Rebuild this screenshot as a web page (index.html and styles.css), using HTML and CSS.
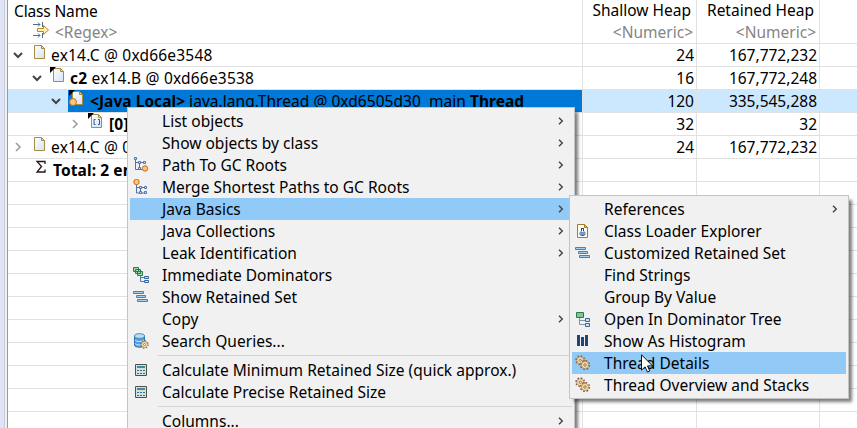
FILE: index.html
```
<!DOCTYPE html>
<html lang="en">
<head>
<meta charset="utf-8">
<title>Heap objects</title>
<link rel="stylesheet" href="styles.css">
</head>
<body>
<svg class="defs" aria-hidden="true">
  <defs>
    <linearGradient id="paper" x1="0" y1="0" x2="1" y2="1"><stop offset="0" stop-color="#fff"/><stop offset="1" stop-color="#d4e2f4"/></linearGradient>
    <symbol id="doc" viewBox="0 0 16 16"><path d="M2.5 1.5h7l3 3v10h-10z" fill="url(#paper)" stroke="#a58d43"/><path d="M9.5 1.5v3h3z" fill="#e9d9a1" stroke="#a58d43"/></symbol>
    <symbol id="chev" viewBox="0 0 16 16"><path d="M4 6l4 4 4-4" fill="none" stroke="#444" stroke-width="2"/></symbol>
    <symbol id="right" viewBox="0 0 16 16"><path d="M6 4l4 4-4 4" fill="none" stroke="#a0a0a0" stroke-width="1.7"/></symbol>
    <symbol id="arrow" viewBox="0 0 8 8"><path d="M2 .7l3.300 3.300-3.300 3.300" fill="none" stroke="#444" stroke-width="1.4"/></symbol>
    <symbol id="path" viewBox="0 0 16 16"><path d="M2.5 1v11.500h7M2.500 5.500h9M6.500 5.500v7" fill="none" stroke="#5272ac"/><path d="M1.500.500h2v2h-2zM5.500 4.500h2v2h-2zM10.500 4.500h2v2h-2zM5.500 10.500h2v2h-2z" fill="#dce8fa" stroke="#5272ac"/><circle cx="12" cy="11.500" r="2.700" fill="#ffc580" stroke="#c66d12"/></symbol>
    <symbol id="merge" viewBox="0 0 16 16"><path d="M3.500 5v9h9M3.500 8.500h9M7.500 8.500v5.500" fill="none" stroke="#5272ac"/><path d="M6.500 7.500h2v2h-2zM11.500 7.500h2v2h-2zM6.500 12.500h2v2h-2zM11.500 12.500h2v2h-2z" fill="#dce8fa" stroke="#5272ac"/><circle cx="3.500" cy="3" r="2.700" fill="#ffc580" stroke="#c66d12"/></symbol>
    <symbol id="dom" viewBox="0 0 16 16"><path d="M.500.500h5v4h-5zM2.500 2.500h5v4h-5zM4.500 4.500h5v4h-5z" fill="#a6d8b4" stroke="#277c4b"/><path d="M7.500 8.500v6H12M7.500 10.500H12" fill="none" stroke="#5878aa"/><path d="M11.500 9.500h4v2h-4zM11.500 13.500h4v2h-4z" fill="#cce1fa" stroke="#3767a3"/></symbol>
    <symbol id="tree" viewBox="0 0 16 16"><path d="M1.500 1.500h7v5h-7z" fill="#82c595" stroke="#277c4b"/><path d="M4.500 7v6.500H10M4.500 9.500H10" fill="none" stroke="#8292a5"/><path d="M10.500 7.500h4v3h-4zM10.500 12.500h4v3h-4z" fill="#cce1fa" stroke="#3767a3"/></symbol>
    <symbol id="set" viewBox="0 0 16 16"><path d="M.500 2.500h10v2H.500zM3.500 6.500h9v2h-9zM4.500 10.500h10v2h-10z" fill="#a9cce7" stroke="#567ca7"/></symbol>
    <symbol id="calc" viewBox="0 0 16 16"><path d="M2.500 2.500h11v11h-11z" fill="#d3e2df" stroke="#545238"/><path d="M4 4h8v2H4z" fill="#3e87ad"/><path d="M4 8h2v1H4zm3 0h2v1H7zm3 0h2v1h-2zm-6 3h2v1H4zm3 0h2v1H7zm3 0h2v1h-2z" fill="#386f91"/></symbol>
    <symbol id="cog" viewBox="0 0 10 10"><circle cx="5" cy="5" r="3.900" fill="none" stroke="#8b6048" stroke-width="1.700" stroke-dasharray="1.530 1.530"/><circle cx="5" cy="5" r="3.200" fill="#fbe3a8" stroke="#b98a50" stroke-width=".7"/><circle cx="5" cy="5" r="1.100" fill="#fff" stroke="#735f58" stroke-width=".8"/></symbol>
    <symbol id="gears" viewBox="0 0 16 16"><use href="#cog" x="0" y="0" width="10.500" height="10.500"/><use href="#cog" x="4.500" y="4.500" width="11" height="11"/></symbol>
    <symbol id="search" viewBox="0 0 16 16"><path d="M1.500 3v9c0 3 10 3 10 0V3z" fill="#579be0" stroke="#3070b5"/><ellipse cx="6.500" cy="3" rx="5" ry="2.300" fill="#b9e0f2" stroke="#4988b7"/><path d="M2 7c1 2 8 2 9 0M2 10.500c1 2 8 2 9 0" fill="none" stroke="#d1edff"/><use href="#cog" x="7" y="7" width="9" height="9"/></symbol>
    <symbol id="loader" viewBox="0 0 16 16"><path d="M2.500 1.500h7l3 3v10h-10z" fill="#fffdf4" stroke="#a57b22"/><path d="M9.500 1.500v3h3z" fill="#e8c875" stroke="#a57b22"/><path d="M6 5.500h3M6.500 6v2c-2 1.500-2 4.500 0 4.500h2c2 0 2-3 0-4.500V6" fill="#fff" stroke="#244c79"/><path d="M6 9h3v3H6z" fill="#5a9fdc"/></symbol>
    <symbol id="bars" viewBox="0 0 16 16"><path d="M2 2h3v11H2zM6 4h3v9H6zM10 2h3v11h-3z" fill="#204678"/></symbol>
    <symbol id="filter" viewBox="0 0 16 16"><path d="M0 2.500h7M0 13.500h7M5 .500l2 2-2 2M5 11.500l2 2-2 2M9.500 0v5M9.500 11v5" fill="none" stroke="#526d87"/><path d="M4.500 6.500h6v-3l5 4.500-5 4.500v-3h-6z" fill="#fff0b5" stroke="#bd851c"/></symbol>
  </defs>
</svg>
<main class="view">
  <div class="gutter"></div>
  <div class="table">
    <div class="row head"><div class="cell name">Class Name</div><div class="cell num">Shallow Heap</div><div class="cell num">Retained Heap</div><div class="cell"></div></div>
    <div class="row filter"><div class="cell name"><svg class="ic"><use href="#filter"/></svg><span>&lt;Regex&gt;</span></div><div class="cell num">&lt;Numeric&gt;</div><div class="cell num">&lt;Numeric&gt;</div><div class="cell"></div></div>
    <div class="row"><div class="cell name l0"><svg class="tw"><use href="#chev"/></svg><svg class="ic"><use href="#doc"/></svg><span class="label">ex14.C @ 0xd66e3548</span></div><div class="cell num">24</div><div class="cell num">167,772,232</div><div class="cell"></div></div>
    <div class="row"><div class="cell name l1"><svg class="tw"><use href="#chev"/></svg><span class="ic tagged"><svg class="ic"><use href="#doc"/></svg></span><span class="label"><b>c2</b> ex14.B @ 0xd66e3538</span></div><div class="cell num">16</div><div class="cell num">167,772,248</div><div class="cell"></div></div>
    <div class="row current"><div class="cell name l2"><svg class="tw"><use href="#chev"/></svg><div class="selected"><span class="ic tagged rooted"><svg class="ic"><use href="#doc"/></svg></span><span class="label"><b>&lt;Java Local&gt;</b> java.lang.Thread @ 0xd6505d30&nbsp; main <b>Thread</b></span></div></div><div class="cell num">120</div><div class="cell num">335,545,288</div><div class="cell"></div></div>
    <div class="row"><div class="cell name l3"><svg class="tw"><use href="#right"/></svg><span class="ic tagged"><svg class="ic" viewBox="0 0 16 16"><use href="#doc"/><path d="M6.500 6.500H5v5h1.500M9 6.500h1.500v5H9" fill="none" stroke="#215fa5"/></svg></span><span class="label"><b>[0]</b></span></div><div class="cell num">32</div><div class="cell num">32</div><div class="cell"></div></div>
    <div class="row"><div class="cell name l0"><svg class="tw"><use href="#right"/></svg><svg class="ic"><use href="#doc"/></svg><span class="label">ex14.C @ 0</span></div><div class="cell num">24</div><div class="cell num">167,772,232</div><div class="cell"></div></div>
    <div class="row"><div class="cell name total"><svg class="ic" viewBox="0 0 16 16"><path d="M12 5V2.500H4l4.500 5L4 13h8v-2.500" fill="none" stroke="#28151b" stroke-width="1.300"/></svg><b>Total: 2 en</b></div><div class="cell"></div><div class="cell"></div><div class="cell"></div></div>
    <div class="row"><i class="cell"></i><i class="cell"></i><i class="cell"></i><i class="cell"></i></div>
    <div class="row"><i class="cell"></i><i class="cell"></i><i class="cell"></i><i class="cell"></i></div>
    <div class="row"><i class="cell"></i><i class="cell"></i><i class="cell"></i><i class="cell"></i></div>
    <div class="row"><i class="cell"></i><i class="cell"></i><i class="cell"></i><i class="cell"></i></div>
    <div class="row"><i class="cell"></i><i class="cell"></i><i class="cell"></i><i class="cell"></i></div>
    <div class="row"><i class="cell"></i><i class="cell"></i><i class="cell"></i><i class="cell"></i></div>
    <div class="row"><i class="cell"></i><i class="cell"></i><i class="cell"></i><i class="cell"></i></div>
    <div class="row"><i class="cell"></i><i class="cell"></i><i class="cell"></i><i class="cell"></i></div>
    <div class="row"><i class="cell"></i><i class="cell"></i><i class="cell"></i><i class="cell"></i></div>
    <div class="row"><i class="cell"></i><i class="cell"></i><i class="cell"></i><i class="cell"></i></div>
    <div class="row"><i class="cell"></i><i class="cell"></i><i class="cell"></i><i class="cell"></i></div>
  </div>
</main>
<nav class="menu context">
  <div class="item"><span></span><span>List objects</span><svg class="go"><use href="#arrow"/></svg></div>
  <div class="item"><span></span><span>Show objects by class</span><svg class="go"><use href="#arrow"/></svg></div>
  <div class="item"><svg class="ic"><use href="#path"/></svg><span>Path To GC Roots</span><svg class="go"><use href="#arrow"/></svg></div>
  <div class="item"><svg class="ic"><use href="#merge"/></svg><span>Merge Shortest Paths to GC Roots</span><svg class="go"><use href="#arrow"/></svg></div>
  <div class="item active"><span></span><span>Java Basics</span><svg class="go"><use href="#arrow"/></svg></div>
  <div class="item"><span></span><span>Java Collections</span><svg class="go"><use href="#arrow"/></svg></div>
  <div class="item"><span></span><span>Leak Identification</span><svg class="go"><use href="#arrow"/></svg></div>
  <div class="item"><svg class="ic"><use href="#dom"/></svg><span>Immediate Dominators</span></div>
  <div class="item"><svg class="ic"><use href="#set"/></svg><span>Show Retained Set</span></div>
  <div class="item"><span></span><span>Copy</span><svg class="go"><use href="#arrow"/></svg></div>
  <div class="item"><svg class="ic"><use href="#search"/></svg><span>Search Queries...</span></div>
  <div class="sep"></div>
  <div class="item"><svg class="ic"><use href="#calc"/></svg><span>Calculate Minimum Retained Size (quick approx.)</span></div>
  <div class="item"><svg class="ic"><use href="#calc"/></svg><span>Calculate Precise Retained Size</span></div>
  <div class="sep"></div>
  <div class="item"><span></span><span>Columns...</span><svg class="go"><use href="#arrow"/></svg></div>
</nav>
<nav class="menu sub">
  <div class="item"><span></span><span>References</span><svg class="go"><use href="#arrow"/></svg></div>
  <div class="item"><svg class="ic"><use href="#loader"/></svg><span>Class Loader Explorer</span></div>
  <div class="item"><svg class="ic"><use href="#set"/></svg><span>Customized Retained Set</span></div>
  <div class="item"><span></span><span>Find Strings</span></div>
  <div class="item"><span></span><span>Group By Value</span></div>
  <div class="item"><svg class="ic"><use href="#tree"/></svg><span>Open In Dominator Tree</span></div>
  <div class="item"><svg class="ic"><use href="#bars"/></svg><span>Show As Histogram</span></div>
  <div class="item active"><svg class="ic"><use href="#gears"/></svg><span>Thread Details</span></div>
  <div class="item"><svg class="ic"><use href="#gears"/></svg><span>Thread Overview and Stacks</span></div>
</nav>
<svg class="cursor" viewBox="0 0 12 19"><path d="M.500.800v15.400l3.600-3.400 2.300 5.200 2.400-1-2.300-5.100h5z" fill="#fff" stroke="#111"/></svg>
</body>
</html>
```
FILE: styles.css
```
* { box-sizing: border-box; }
body { margin: 0; width: 857px; height: 428px; overflow: hidden; background: #fff; color: #000; font: 15.5px/22px "Noto Sans", "Open Sans", sans-serif; }
.defs { position: absolute; width: 0; height: 0; }
.view { display: flex; height: 428px; overflow: hidden; }
.gutter { width: 8px; flex: none; background: linear-gradient(90deg, #dfe5f6 0 4px, #c5cce0 4px 5px, #f0f0f0 5px 7px, #9b9b9b 7px); }
.table { flex: 1; }
.row { display: grid; grid-template-columns: 575px 114px 123px 1fr; height: 23px; white-space: nowrap; }
.head { height: 21px; }
.cell { border-right: 1px solid #e1e1e1; border-bottom: 1px solid #e1e1e1; }
.cell:last-child { border-right: 0; }
.head .cell { line-height: 20px; border-bottom: 0; }
.head .name { padding-left: 6px; letter-spacing: -.15px; }
.num { text-align: right; padding-right: 2px; }
.head .num { padding-right: 5px; }
.filter .num { padding-right: 3px; }
.filter { color: #858585; }
.name { display: flex; align-items: center; }
.filter .name { padding-left: 25px; gap: 6px; }
.ic { display: block; width: 16px; height: 16px; flex: none; }
.tw { width: 16px; height: 16px; margin-right: 6px; flex: none; }
.name > .ic { margin-top: -6px; }
.filter .name > .ic { margin-top: -4px; }
.l0 { padding-left: 2px; }
.l1 { padding-left: 21px; }
.l2 { padding-left: 40px; }
.l3 { padding-left: 59px; }
.label { margin-left: 3px; letter-spacing: .2px; }
.l3 .label { margin-left: 4px; }
.selected { display: flex; align-items: center; flex: 1; height: 22px; margin-left: -2px; padding-left: 2px; background: #0078d7; }
.selected .ic { margin-top: 0; }
.selected > .tagged { margin-top: -6px; }
.selected .label { margin-left: 4px; letter-spacing: .04px; }
.current { background: #cce8ff; }
.tagged { position: relative; }
.tagged::before { content: ""; position: absolute; left: -1px; top: 0; border-top: 6px solid #000; border-right: 6px solid transparent; }
.rooted::after { content: ""; position: absolute; left: -1px; bottom: 0; width: 6px; height: 6px; border: 1px solid #c66d12; border-radius: 50%; background: #ffc580; }
.total { padding-left: 25px; gap: 4px; }
.total b { letter-spacing: .1px; }
.menu { position: absolute; background: #f1f1f1; border: 1px solid #c4c4c4; padding: 2px; box-shadow: 4px 4px 3px -1px rgba(0,0,0,.5); white-space: nowrap; font-size: 15.5px; letter-spacing: .02px; }
.context { left: 127px; top: 107px; width: 448px; height: 321px; border-bottom: 0; padding-bottom: 0; }
.sub { left: 569px; top: 195px; width: 280px; height: 204px; }
.item { display: grid; grid-template-columns: 16px 1fr 8px; column-gap: 13px; align-items: center; height: 22px; padding: 0 7px 0 3px; }
.item .go { width: 8px; height: 8px; margin-top: -1px; }
.active { background: #91c9f7; }
.sep { height: 7px; padding: 3px 0; margin-left: 28px; }
.sep::before { content: ""; display: block; height: 1px; background: #d5d5d5; }
.cursor { position: absolute; left: 641px; top: 354px; width: 12px; height: 19px; }
```
